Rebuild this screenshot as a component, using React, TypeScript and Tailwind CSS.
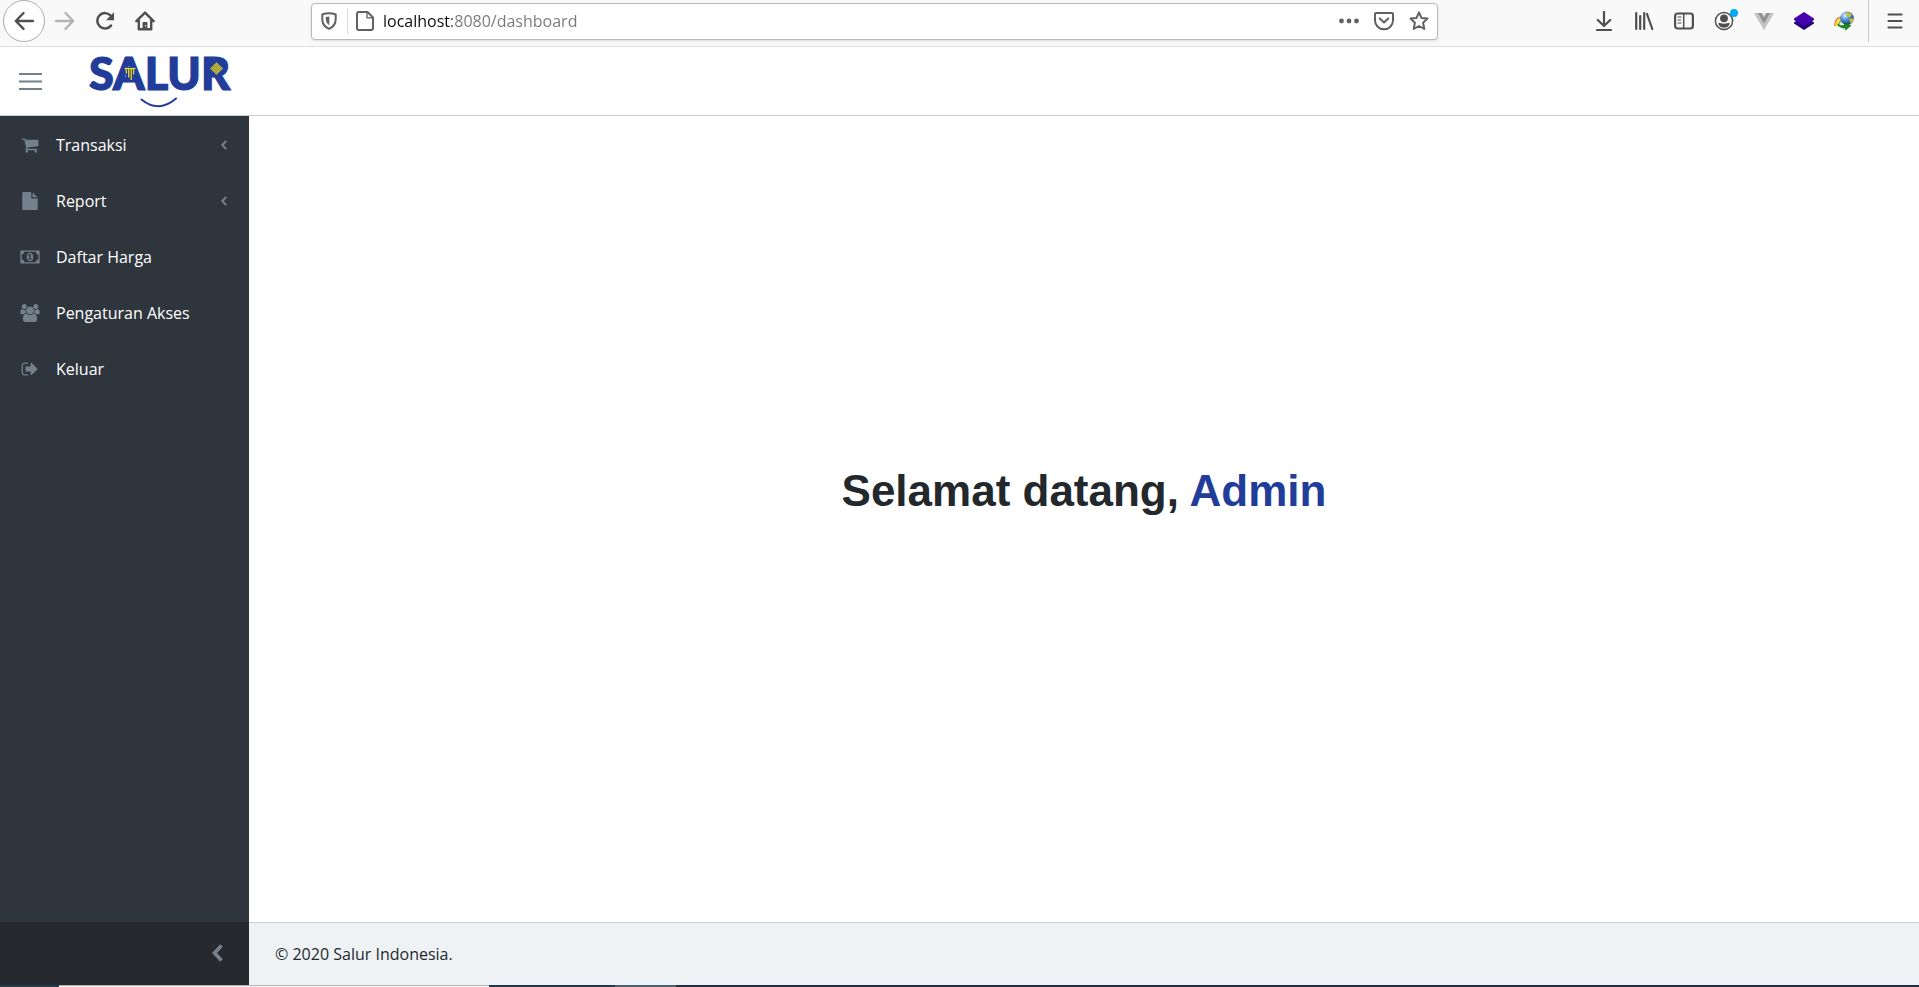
import type { ReactNode } from "react";

type IconProps = { className?: string };

const stroke = {
  fill: "none",
  stroke: "currentColor",
  strokeWidth: 2.4,
  strokeLinecap: "round" as const,
  strokeLinejoin: "round" as const,
};

function BackIcon() {
  return (
    <svg className="size-5" viewBox="0 0 20 20" {...stroke} aria-hidden="true">
      <path d="M19 10H2M9.5 2 1.8 10l7.7 7.8" />
    </svg>
  );
}

function ForwardIcon() {
  return (
    <svg className="size-5" viewBox="0 0 20 20" {...stroke} aria-hidden="true">
      <path d="M1 10h17M10.5 2l7.7 8-7.7 7.8" />
    </svg>
  );
}

function ReloadIcon() {
  return (
    <svg className="size-5" viewBox="0 0 20 20" {...stroke} strokeWidth={2.5} aria-hidden="true">
      <path d="M16 14.6A7.7 7.7 0 1 1 16 5" />
      <path d="M19 1.3v8h-8z" fill="currentColor" stroke="none" />
    </svg>
  );
}

function HomeIcon() {
  return (
    <svg className="size-5" viewBox="0 0 20 20" {...stroke} aria-hidden="true">
      <path d="M1.4 10.2 10 1.6l8.6 8.6M3.8 9.5v8.8h12.4V9.5" />
      <path d="M7.6 18.5V11h4.8v7.5z" fill="currentColor" stroke="none" />
      <path d="M10.6 14.4v.6" stroke="#fff" strokeWidth="1" />
    </svg>
  );
}

function ShieldIcon() {
  return (
    <svg className="h-[18px] w-4" viewBox="0 0 16 18" {...stroke} strokeWidth={2} aria-hidden="true">
      <path d="M8 1.2c2.2 0 4.6.4 6.7 1.3V7c0 5-2.2 8-6.7 9.900C3.500 15 1.300 12 1.300 7V2.500C3.400 1.600 5.800 1.200 8 1.200z" />
      <path d="M8.300 4.500c-1.400 0-2.600.2-3.600.6C4.700 9.300 5.500 11.500 8.300 13.300z" fill="currentColor" stroke="none" />
    </svg>
  );
}

function PageIcon() {
  return (
    <svg className="h-5 w-[18px]" viewBox="0 0 18 20" {...stroke} strokeWidth={2} aria-hidden="true">
      <path d="M3 1h8.500L17 6.500V17a2 2 0 0 1-2 2H3a2 2 0 0 1-2-2V3a2 2 0 0 1 2-2z" />
      <path d="M11 1.500v5.300h5.500" strokeWidth={1.3} />
    </svg>
  );
}

function DotsIcon() {
  return (
    <svg className="size-5" viewBox="0 0 20 20" fill="currentColor" aria-hidden="true">
      <circle cx="2.500" cy="10" r="2.400" />
      <circle cx="10" cy="10" r="2.400" />
      <circle cx="17.500" cy="10" r="2.400" />
    </svg>
  );
}

function PocketIcon() {
  return (
    <svg className="size-5" viewBox="0 0 20 20" {...stroke} strokeWidth={2} aria-hidden="true">
      <path d="M2 2h16a1 1 0 0 1 1 1v6.500a9 8.800 0 0 1-18 0V3a1 1 0 0 1 1-1z" />
      <path d="m5.800 7.500 4.200 4 4.200-4" />
    </svg>
  );
}

function StarIcon() {
  return (
    <svg className="size-5" viewBox="0 0 20 20" {...stroke} strokeWidth={2} aria-hidden="true">
      <path d="m10 1.500 2.500 5.400 6 .7-4.400 4.100 1.200 6.300L10 15l-5.300 3 1.200-6.300L1.500 7.600l6-.7z" />
    </svg>
  );
}

function DownloadIcon() {
  return (
    <svg className="size-5" viewBox="0 0 20 20" {...stroke} strokeWidth={2.2} aria-hidden="true">
      <path d="M10 1v13.500M3.800 9 10 15l6.200-6M3 19h14" />
    </svg>
  );
}

function LibraryIcon() {
  return (
    <svg className="size-5" viewBox="0 0 20 20" {...stroke} strokeWidth={2.2} aria-hidden="true">
      <path d="M2.200 2v16M6.200 5v13M10.200 2v16M13 3l5.300 15" />
    </svg>
  );
}

function SidebarIcon() {
  return (
    <svg className="size-5" viewBox="0 0 20 20" {...stroke} strokeWidth={2.2} aria-hidden="true">
      <rect x="1.100" y="2.500" width="17.800" height="15" rx="2.500" />
      <path d="M9.700 3v14" strokeWidth={1.5} />
      <path d="M4 6h3M4 9h2.500M4 12h3" strokeWidth={1.2} />
    </svg>
  );
}

function AccountIcon() {
  return (
    <svg className="size-5" viewBox="0 0 20 20" aria-hidden="true">
      <circle cx="10" cy="10" r="8.600" fill="none" stroke="currentColor" strokeWidth="1.500" />
      <circle cx="10" cy="7.300" r="3.900" fill="currentColor" />
      <path d="M4.600 11.500c2 1.500 8.800 1.500 10.800 0 .5 3.200-2 5.200-5.400 5.200s-5.900-2-5.400-5.200z" fill="currentColor" />
    </svg>
  );
}

function VueIcon() {
  return (
    <svg className="size-5" viewBox="0 0 20 20" aria-hidden="true">
      <path d="M0 2h20L10 19.300z" fill="#c3c3c3" />
      <path d="M4 2h3.500L10 6.200 12.500 2H16l-6 10.400z" fill="#8f8f8f" />
      <path d="M7.500 2h5L10 6.200z" fill="#dedede" />
    </svg>
  );
}

function LayersIcon() {
  return (
    <svg className="size-5" viewBox="0 0 20 20" aria-hidden="true">
      <path d="m10 5 10 6.500v1L10 19 0 12.500v-1z" fill="#230078" />
      <path d="m10 1 10 6.600v1.300L10 15 0 8.900V7.600z" fill="#4503b0" />
    </svg>
  );
}

function GlobeDownloadIcon() {
  return (
    <svg className="size-5" viewBox="0 0 20 20" aria-hidden="true">
      <defs>
        <radialGradient id="globe" cx=".35" cy=".3" r=".75">
          <stop offset="0" stopColor="#d9efff" />
          <stop offset=".45" stopColor="#4d8fd0" />
          <stop offset="1" stopColor="#15396f" />
        </radialGradient>
      </defs>
      <path d="M9 5.800C4 5.800.4 9 1 15" fill="none" stroke="#e0562b" strokeWidth="1.300" />
      <path d="M9 7.600C5 7.600 1.900 10 2.800 15.500" fill="none" stroke="#f6e02e" strokeWidth="2.400" />
      <path d="M10 9.600c-3.500 0-5.700 1.500-5.200 6" fill="none" stroke="#6fc04a" strokeWidth="1.600" />
      <circle cx="13" cy="7.300" r="6.800" fill="url(#globe)" />
      <path d="M12.500 1c2 .2 4.500 1.200 5.500 3l-2.500 2.500-3-1.500zM15 8l4.500-1c.3 2.500-.7 4.500-2.700 5.700z" fill="#c3bd37" />
      <path d="M3.500 13c2.500 1.800 5 1.800 7.500.8l-.6-1.800 6.600 2.600-5.400 4.600-.1-2.200c-3.200.6-6-.8-8-4z" fill="#178a1c" stroke="#075c0c" strokeWidth=".5" />
    </svg>
  );
}

function MenuIcon() {
  return (
    <svg className="size-5" viewBox="0 0 20 20" {...stroke} strokeWidth={2.2} aria-hidden="true">
      <path d="M3.500 3.500h13M3.500 10h13M3.500 16.500h13" />
    </svg>
  );
}

function ToolButton({ label, children, className = "" }: { label: string; children: ReactNode; className?: string }) {
  return (
    <button type="button" aria-label={label} className={`relative flex h-10 w-10 shrink-0 items-center justify-center ${className}`}>
      {children}
    </button>
  );
}

function BrowserBar() {
  return (
    <div className="flex items-center border-b border-[#dedede] bg-[#f9f9fa] pb-1 pl-[3px] pr-1 text-[#4f4f50]">
      <button
        type="button"
        aria-label="Back"
        className="flex size-[42px] shrink-0 items-center justify-center rounded-full border border-[#adadae] bg-white"
      >
        <BackIcon />
      </button>
      <ToolButton label="Forward" className="text-[#b4b4b5]">
        <ForwardIcon />
      </ToolButton>
      <ToolButton label="Reload">
        <ReloadIcon />
      </ToolButton>
      <ToolButton label="Home">
        <HomeIcon />
      </ToolButton>
      <div className="mx-[146px] flex h-[37px] min-w-0 flex-1 items-center rounded-sm border border-[#b9b9ba] bg-white pl-[9px] pr-2 text-[#616162] shadow-sm">
        <ShieldIcon />
        <span className="ml-[10px] mr-2 h-[26px] w-px bg-[#dcdcdc]" />
        <PageIcon />
        <input
          aria-label="Address"
          defaultValue="localhost:8080/dashboard"
          className="ml-[9px] min-w-0 flex-1 bg-[linear-gradient(to_right,#0c0c0d_69px,#77777a_69px)] bg-clip-text font-['Open_Sans','Noto_Sans',sans-serif] text-base text-transparent outline-none"
        />
        <div className="flex items-center gap-[15px]">
          <button type="button" aria-label="Page actions">
            <DotsIcon />
          </button>
          <button type="button" aria-label="Save to Pocket">
            <PocketIcon />
          </button>
          <button type="button" aria-label="Bookmark">
            <StarIcon />
          </button>
        </div>
      </div>
      <ToolButton label="Downloads">
        <DownloadIcon />
      </ToolButton>
      <ToolButton label="Library">
        <LibraryIcon />
      </ToolButton>
      <ToolButton label="Sidebars">
        <SidebarIcon />
      </ToolButton>
      <ToolButton label="Account">
        <AccountIcon />
        <span className="absolute right-1.5 top-2 size-2 rounded-full bg-[#00aaf5]" />
      </ToolButton>
      <ToolButton label="Vue devtools">
        <VueIcon />
      </ToolButton>
      <ToolButton label="Layers">
        <LayersIcon />
      </ToolButton>
      <ToolButton label="Download manager">
        <GlobeDownloadIcon />
      </ToolButton>
      <span className="ml-1 mr-1.5 h-[42px] w-px bg-[#c8c8c9]" />
      <ToolButton label="Menu">
        <MenuIcon />
      </ToolButton>
    </div>
  );
}

function Logo() {
  return (
    <svg className="h-[72px] w-[150px] overflow-visible" viewBox="0 -11 150 72" role="img" aria-label="Salur">
      <defs>
        <pattern id="weave" width="2" height="2" patternUnits="userSpaceOnUse" patternTransform="rotate(45)">
          <rect width="2" height="2" fill="#7c8148" />
          <path d="M0 .5h2M.5 0v2" stroke="#c9c235" strokeWidth=".8" />
        </pattern>
      </defs>
      <text
        x="1"
        y="34"
        fill="#213c99"
        stroke="#213c99"
        strokeWidth="1.200"
        fontSize="45"
        className="font-['Lato','Open_Sans',sans-serif] font-black"
      >
        SALUR
      </text>
      <path d="M36 11h12l-2 12h-8z" fill="#213c99" />
      <path d="M36.500 12.500h11" stroke="#e7df25" strokeWidth="1.200" />
      <path d="M38.300 12.500v5M40.700 12.500v9M43.200 12.500v11.500M45.600 12.500v6" stroke="#e7df25" strokeWidth="1.300" fill="none" />
      <path d="M121 6h10l4 6-4 7h-10z" fill="#213c99" />
      <path d="m128.500 6 6.500 6.500-6.500 6.500-6.500-6.500z" fill="url(#weave)" />
      <path d="M53.500 43.500q17 14 34.500-1" fill="none" stroke="#213c99" strokeWidth="2" strokeLinecap="round" />
    </svg>
  );
}

function CartIcon({ className }: IconProps) {
  return (
    <svg className={className} viewBox="0 0 1792 1792" fill="currentColor" aria-hidden="true">
      <path d="M704 1536q0 52-38 90t-90 38-90-38-38-90 38-90 90-38 90 38 38 90zm896 0q0 52-38 90t-90 38-90-38-38-90 38-90 90-38 90 38 38 90zm128-1088v512q0 24-16.500 42.500t-40.500 21.500l-1044 122q13 60 13 70 0 16-24 64h920q26 0 45 19t19 45-19 45-45 19h-1024q-26 0-45-19t-19-45q0-11 8-31.500t16-36 21.500-40 15.500-29.500l-177-823h-204q-26 0-45-19t-19-45 19-45 45-19h256q16 0 28.500 6.500t19.500 15.500 13 24.500 8 26 5.500 29.500 4.500 26h1201q26 0 45 19t19 45z" />
    </svg>
  );
}

function FileIcon({ className }: IconProps) {
  return (
    <svg className={className} viewBox="0 0 1792 1792" fill="currentColor" aria-hidden="true">
      <path d="M1152 512v-472q22 14 36 28l408 408q14 14 28 36h-472zm-128 32q0 40 28 68t68 28h544v1056q0 40-28 68t-68 28h-1344q-40 0-68-28t-28-68v-1600q0-40 28-68t68-28h800v544z" />
    </svg>
  );
}

function MoneyIcon({ className }: IconProps) {
  return (
    <svg className={className} viewBox="0 0 1920 1792" fill="currentColor" aria-hidden="true">
      <path d="M768 1152h384v-96h-128v-448h-114l-148 137 77 80q42-37 55-57h2v288h-128v96zm512-256q0 70-21 142t-59.500 134-101.500 101-138 39-138-39-101.500-101-59.500-134-21-142 21-142 59.500-134 101.500-101 138-39 138 39 101.500 101 59.500 134 21 142zm512 256v-512q-106 0-181-75t-75-181h-1152q0 106-75 181t-181 75v512q106 0 181 75t75 181h1152q0-106 75-181t181-75zm128-832v1152q0 26-19 45t-45 19h-1792q-26 0-45-19t-19-45v-1152q0-26 19-45t45-19h1792q26 0 45 19t19 45z" />
    </svg>
  );
}

function GroupIcon({ className }: IconProps) {
  return (
    <svg className={className} viewBox="0 0 1920 1792" fill="currentColor" aria-hidden="true">
      <path d="M593 896q-162 5-265 128h-134q-82 0-138-40.500t-56-118.500q0-353 124-353 6 0 43.500 21t97.500 42.500 119 21.500q67 0 133-23-5 37-5 66 0 139 81 256zm1071 637q0 120-73 189.500t-194 69.500h-874q-121 0-194-69.500t-73-189.500q0-53 3.500-103.500t14-109 26.500-108.500 43-97.500 62-81 85.500-53.500 111.500-20q10 0 43 21.500t73 48 107 48 135 21.500 135-21.500 107-48 73-48 43-21.500q61 0 111.500 20t85.500 53.500 62 81 43 97.500 26.500 108.500 14 109 3.500 103.500zm-1024-1277q0 106-75 181t-181 75-181-75-75-181 75-181 181-75 181 75 75 181zm704 384q0 159-112.500 271.500t-271.500 112.500-271.500-112.500-112.500-271.500 112.500-271.500 271.500-112.500 271.500 112.500 112.500 271.500zm576 225q0 78-56 118.500t-138 40.500h-134q-103-123-265-128 81-117 81-256 0-29-5-66 66 23 133 23 59 0 119-21.500t97.500-42.500 43.500-21q124 0 124 353zm-128-609q0 106-75 181t-181 75-181-75-75-181 75-181 181-75 181 75 75 181z" />
    </svg>
  );
}

function SignOutIcon({ className }: IconProps) {
  return (
    <svg className={className} viewBox="0 0 1792 1792" fill="currentColor" aria-hidden="true">
      <path d="M704 1440q0 4 1 20t.5 26.500-3 23.500-10 19.500-20.500 6.500h-320q-119 0-203.500-84.500t-84.500-203.500v-704q0-119 84.500-203.500t203.500-84.500h320q13 0 22.500 9.500t9.500 22.500q0 4 1 20t.5 26.500-3 23.500-10 19.500-20.500 6.500h-320q-66 0-113 47t-47 113v704q0 66 47 113t113 47h312l11.500 1 11.500 3 8 5.500 7 9 2 13.500zm928-544q0 26-19 45l-544 544q-19 19-45 19t-45-19-19-45v-288h-448q-26 0-45-19t-19-45v-384q0-26 19-45t45-19h448v-288q0-26 19-45t45-19 45 19l544 544q19 19 19 45z" />
    </svg>
  );
}

function Chevron({ className }: IconProps) {
  return (
    <svg className={className} viewBox="0 0 11 18" aria-hidden="true">
      <path d="M9.500 1.500 2.500 9l7 7.500" fill="none" stroke="currentColor" strokeWidth="3.800" />
    </svg>
  );
}

const items = [
  { label: "Transaksi", Icon: CartIcon, nested: true },
  { label: "Report", Icon: FileIcon, nested: true },
  { label: "Daftar Harga", Icon: MoneyIcon, nested: false },
  { label: "Pengaturan Akses", Icon: GroupIcon, nested: false },
  { label: "Keluar", Icon: SignOutIcon, nested: false },
];

function Sidebar() {
  return (
    <aside className="flex w-[249px] shrink-0 flex-col bg-[#2f353c]">
      <nav className="flex-1 pt-px">
        <ul>
          {items.map(({ label, Icon, nested }) => (
            <li key={label}>
              <a href="#" className="flex h-14 items-center pl-5 pr-[22px] text-white">
                <Icon className="h-[18px] w-5 shrink-0 text-[#73818f]" />
                <span className="ml-4 flex-1 text-base">{label}</span>
                {nested && <Chevron className="h-2.5 w-1.5 text-[#73818f]" />}
              </a>
            </li>
          ))}
        </ul>
      </nav>
      <button type="button" aria-label="Minimize sidebar" className="flex h-[63px] items-center justify-end bg-[#262a2e] pb-0.5 pr-[26px] text-[#73818f]">
        <Chevron className="h-[18px] w-[11px]" />
      </button>
    </aside>
  );
}

export default function App() {
  return (
    <div className="flex min-h-screen flex-col bg-white font-['Open_Sans','Noto_Sans',sans-serif] text-[#23282c]">
      <BrowserBar />
      <header className="flex h-[69px] items-center gap-[46px] border-b border-[#c8ced3] bg-white pl-[19px]">
        <button type="button" aria-label="Toggle sidebar" className="text-[#73818f]">
          <svg className="h-5 w-[23px]" viewBox="0 0 23 20" stroke="currentColor" strokeWidth="2" aria-hidden="true">
            <path d="M0 3h23M0 10.500h23M0 18h23" />
          </svg>
        </button>
        <a href="#" aria-label="Salur">
          <Logo />
        </a>
      </header>
      <div className="flex flex-1">
        <Sidebar />
        <div className="flex flex-1 flex-col">
          <main className="flex flex-1 items-center justify-center pb-14">
            <h1 className="font-['Liberation_Sans',Arial,sans-serif] text-[44px] font-bold leading-none">
              Selamat datang, <span className="text-[#213c99]">Admin</span>
            </h1>
          </main>
          <footer className="flex h-[63px] items-center border-t border-[#c8ced3] bg-[#eef2f5] px-[26px] text-base">
            © 2020 Salur Indonesia.
          </footer>
        </div>
      </div>
      <div className="flex h-0.5 bg-[#1f3044]" aria-hidden="true">
        <span className="w-[59px] bg-[#243b47]" />
        <span className="w-[430px] border-t border-[#b5b5b5] bg-[#f3f3f3]" />
        <span className="w-[126px] bg-[#22384a]" />
        <span className="w-[61px] bg-[#50616d]" />
      </div>
    </div>
  );
}
